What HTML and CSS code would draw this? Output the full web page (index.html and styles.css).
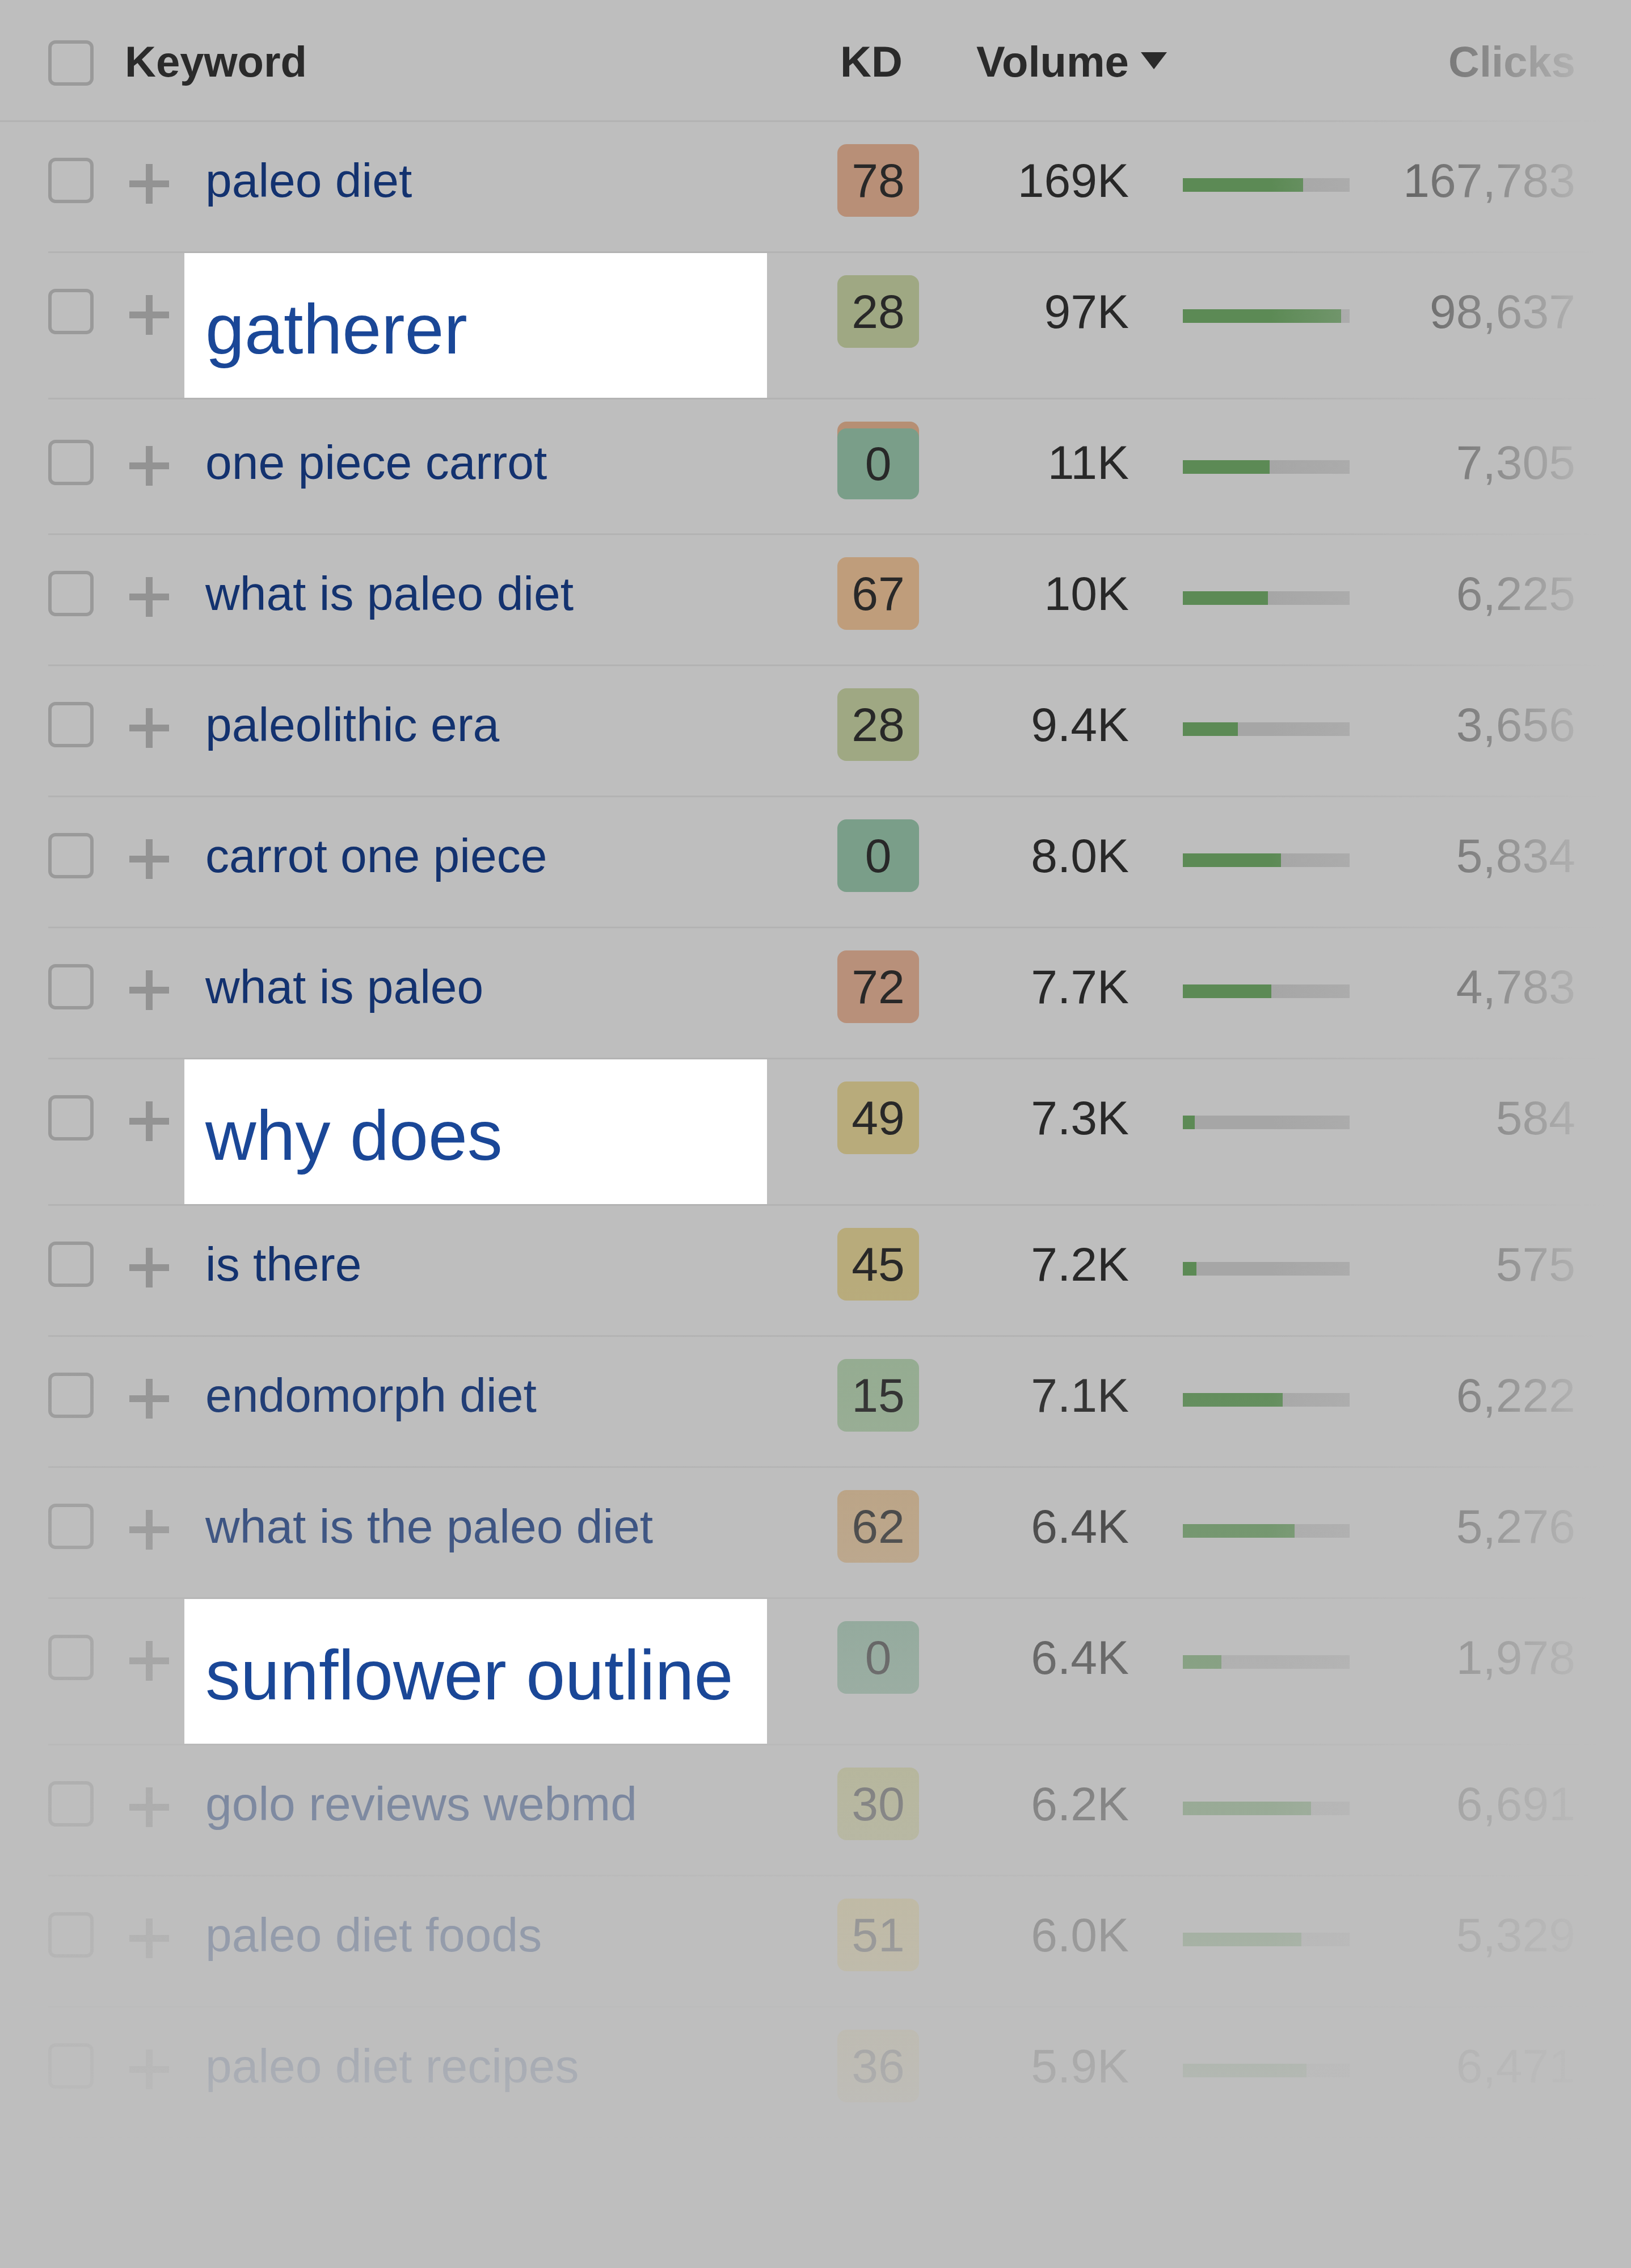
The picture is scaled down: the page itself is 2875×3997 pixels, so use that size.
FILE: index.html
```html
<!DOCTYPE html>
<html lang="en">
<head>
<meta charset="utf-8">
<title>Keywords</title>
<link rel="stylesheet" href="styles.css">
</head>
<body>
<div class="table">
  <div class="thead">
    <span class="cb cb--head"></span>
    <div class="th th-kw">Keyword</div>
    <div class="th th-kd">KD</div>
    <div class="th th-vol">Volume<span class="caret"></span></div>
    <div class="th th-clicks">Clicks</div>
  </div>

  <div class="row">
    <span class="cb"></span>
    <svg class="plus" viewBox="0 0 70 70"><path d="M35 0V70M0 35H70"/></svg>
    <div class="kw">paleo diet</div>
    <div class="kd kd-78">78</div>
    <div class="vol">169K</div>
    <div class="bar"><div class="bar-fill" style="width:72%"></div></div>
    <div class="clicks">167,783</div>
  </div>

  <div class="row row--hl">
    <span class="cb"></span>
    <svg class="plus" viewBox="0 0 70 70"><path d="M35 0V70M0 35H70"/></svg>
    <div class="kw">gatherer</div>
    <div class="kd kd-28">28</div>
    <div class="vol">97K</div>
    <div class="bar"><div class="bar-fill" style="width:95%"></div></div>
    <div class="clicks">98,637</div>
  </div>

  <div class="row row--shift">
    <span class="cb"></span>
    <svg class="plus" viewBox="0 0 70 70"><path d="M35 0V70M0 35H70"/></svg>
    <div class="kw">one piece carrot</div>
    <div class="kd kd-0 kd--capped">0</div>
    <div class="vol">11K</div>
    <div class="bar"><div class="bar-fill" style="width:52%"></div></div>
    <div class="clicks">7,305</div>
  </div>

  <div class="row">
    <span class="cb"></span>
    <svg class="plus" viewBox="0 0 70 70"><path d="M35 0V70M0 35H70"/></svg>
    <div class="kw">what is paleo diet</div>
    <div class="kd kd-67">67</div>
    <div class="vol">10K</div>
    <div class="bar"><div class="bar-fill" style="width:51%"></div></div>
    <div class="clicks">6,225</div>
  </div>

  <div class="row">
    <span class="cb"></span>
    <svg class="plus" viewBox="0 0 70 70"><path d="M35 0V70M0 35H70"/></svg>
    <div class="kw">paleolithic era</div>
    <div class="kd kd-28">28</div>
    <div class="vol">9.4K</div>
    <div class="bar"><div class="bar-fill" style="width:33%"></div></div>
    <div class="clicks">3,656</div>
  </div>

  <div class="row">
    <span class="cb"></span>
    <svg class="plus" viewBox="0 0 70 70"><path d="M35 0V70M0 35H70"/></svg>
    <div class="kw">carrot one piece</div>
    <div class="kd kd-0">0</div>
    <div class="vol">8.0K</div>
    <div class="bar"><div class="bar-fill" style="width:59%"></div></div>
    <div class="clicks">5,834</div>
  </div>

  <div class="row">
    <span class="cb"></span>
    <svg class="plus" viewBox="0 0 70 70"><path d="M35 0V70M0 35H70"/></svg>
    <div class="kw">what is paleo</div>
    <div class="kd kd-72">72</div>
    <div class="vol">7.7K</div>
    <div class="bar"><div class="bar-fill" style="width:53%"></div></div>
    <div class="clicks">4,783</div>
  </div>

  <div class="row row--hl">
    <span class="cb"></span>
    <svg class="plus" viewBox="0 0 70 70"><path d="M35 0V70M0 35H70"/></svg>
    <div class="kw">why does</div>
    <div class="kd kd-49">49</div>
    <div class="vol">7.3K</div>
    <div class="bar"><div class="bar-fill" style="width:7%"></div></div>
    <div class="clicks">584</div>
  </div>

  <div class="row">
    <span class="cb"></span>
    <svg class="plus" viewBox="0 0 70 70"><path d="M35 0V70M0 35H70"/></svg>
    <div class="kw">is there</div>
    <div class="kd kd-45">45</div>
    <div class="vol">7.2K</div>
    <div class="bar"><div class="bar-fill" style="width:8%"></div></div>
    <div class="clicks">575</div>
  </div>

  <div class="row">
    <span class="cb"></span>
    <svg class="plus" viewBox="0 0 70 70"><path d="M35 0V70M0 35H70"/></svg>
    <div class="kw">endomorph diet</div>
    <div class="kd kd-15">15</div>
    <div class="vol">7.1K</div>
    <div class="bar"><div class="bar-fill" style="width:60%"></div></div>
    <div class="clicks">6,222</div>
  </div>

  <div class="row">
    <span class="cb"></span>
    <svg class="plus" viewBox="0 0 70 70"><path d="M35 0V70M0 35H70"/></svg>
    <div class="kw">what is the paleo diet</div>
    <div class="kd kd-62">62</div>
    <div class="vol">6.4K</div>
    <div class="bar"><div class="bar-fill" style="width:67%"></div></div>
    <div class="clicks">5,276</div>
  </div>

  <div class="row row--hl">
    <span class="cb"></span>
    <svg class="plus" viewBox="0 0 70 70"><path d="M35 0V70M0 35H70"/></svg>
    <div class="kw">sunflower outline</div>
    <div class="kd kd-0">0</div>
    <div class="vol">6.4K</div>
    <div class="bar"><div class="bar-fill" style="width:23%"></div></div>
    <div class="clicks">1,978</div>
  </div>

  <div class="row">
    <span class="cb"></span>
    <svg class="plus" viewBox="0 0 70 70"><path d="M35 0V70M0 35H70"/></svg>
    <div class="kw">golo reviews webmd</div>
    <div class="kd kd-30">30</div>
    <div class="vol">6.2K</div>
    <div class="bar"><div class="bar-fill" style="width:77%"></div></div>
    <div class="clicks">6,691</div>
  </div>

  <div class="row">
    <span class="cb"></span>
    <svg class="plus" viewBox="0 0 70 70"><path d="M35 0V70M0 35H70"/></svg>
    <div class="kw">paleo diet foods</div>
    <div class="kd kd-51">51</div>
    <div class="vol">6.0K</div>
    <div class="bar"><div class="bar-fill" style="width:71%"></div></div>
    <div class="clicks">5,329</div>
  </div>

  <div class="row">
    <span class="cb"></span>
    <svg class="plus" viewBox="0 0 70 70"><path d="M35 0V70M0 35H70"/></svg>
    <div class="kw">paleo diet recipes</div>
    <div class="kd kd-36">36</div>
    <div class="vol">5.9K</div>
    <div class="bar"><div class="bar-fill" style="width:74%"></div></div>
    <div class="clicks">6,471</div>
  </div>

  <div class="fade-bottom"></div>
  <div class="fade-right"></div>
</div>
</body>
</html>
```

FILE: styles.css
```css
html, body {
  margin: 0;
  padding: 0;
  background: #bebebe;
}

body {
  width: 2875px;
  height: 3997px;
  overflow: hidden;
  font-family: "Liberation Sans", Arial, Helvetica, sans-serif;
  color: #282828;
}

.table {
  position: relative;
  height: 3997px;
}

/* ---------- header ---------- */
.thead {
  display: flex;
  align-items: flex-start;
  height: 212px;
  padding-left: 85px;
  border-bottom: 3px solid #b3b3b3;
}

.th {
  flex: none;
  font-size: 76px;
  font-weight: 700;
  line-height: 100px;
  padding-top: 59px;
  color: #2a2a2a;
  white-space: nowrap;
}

.th-kw {
  margin-left: 55px;
  width: 1256px;
}

.th-kd {
  width: 144px;
  box-sizing: border-box;
  padding-left: 5px;
}

.th-vol {
  display: flex;
  align-items: flex-start;
  margin-left: 101px;
}

.caret {
  flex: none;
  width: 0;
  height: 0;
  margin-left: 21px;
  margin-top: 33px;
  border-left: 23px solid transparent;
  border-right: 23px solid transparent;
  border-top: 30px solid #2a2a2a;
}

.th-clicks {
  margin-left: auto;
  margin-right: 98px;
}

/* ---------- rows ---------- */
.row {
  display: flex;
  align-items: flex-start;
  height: 228px;
  margin-left: 85px;
  border-bottom: 3px solid #b3b3b3;
}

.row--hl {
  height: 255px;
}

.row--shift {
  padding-top: 8px;
}

.cb {
  flex: none;
  box-sizing: border-box;
  width: 80px;
  height: 80px;
  margin-top: 63px;
  border: 6px solid #9a9a9a;
  border-radius: 13px;
}

.cb--head {
  margin-top: 71px;
}

.plus {
  flex: none;
  display: block;
  width: 70px;
  height: 70px;
  margin-left: 63px;
  margin-top: 74px;
}

.plus path {
  stroke: #939393;
  stroke-width: 12;
  fill: none;
}

.kw {
  flex: none;
  align-self: stretch;
  box-sizing: border-box;
  width: 1027px;
  margin-left: 27px;
  padding-left: 37px;
  padding-top: 53px;
  font-size: 84px;
  line-height: 100px;
  color: #13326f;
  white-space: nowrap;
}

.row--hl .kw {
  position: relative;
  z-index: 2;
  background: #ffffff;
  font-size: 124px;
  line-height: 140px;
  padding-top: 64px;
  color: #1a4797;
}

.kd {
  flex: none;
  width: 144px;
  height: 128px;
  margin-left: 124px;
  margin-top: 39px;
  border-radius: 16px;
  text-align: center;
  font-size: 84px;
  line-height: 128px;
  color: #282828;
}

.kd--capped {
  height: 125px;
  line-height: 125px;
  margin-top: 43px;
  box-shadow: 0 -12px 0 0 #b68f74;
}

.kd-78 { background: #b88f77; }
.kd-72 { background: #b8907a; }
.kd-67 { background: #bf9d7b; }
.kd-62 { background: #bb9e79; }
.kd-51 { background: #c4b068; }
.kd-49 { background: #b8ab7b; }
.kd-45 { background: #b8ab7b; }
.kd-36 { background: #bfae76; }
.kd-30 { background: #acac70; }
.kd-28 { background: #9fa883; }
.kd-15 { background: #93ab8f; }
.kd-0  { background: #7a9e89; }

.vol {
  flex: none;
  width: 370px;
  text-align: right;
  padding-top: 53px;
  font-size: 84px;
  line-height: 100px;
  color: #282828;
}

.bar {
  flex: none;
  width: 294px;
  height: 24px;
  margin-left: 95px;
  margin-top: 99px;
  background: #a6a6a6;
}

.bar-fill {
  height: 100%;
  background: #5c8a55;
}

.clicks {
  flex: none;
  width: 398px;
  text-align: right;
  padding-top: 53px;
  font-size: 84px;
  line-height: 100px;
  color: #282828;
}

/* ---------- fades ---------- */
.fade-bottom {
  position: absolute;
  left: 0;
  right: 0;
  top: 2250px;
  bottom: 0;
  z-index: 1;
  pointer-events: none;
  background: linear-gradient(to bottom,
    rgba(190, 190, 190, 0) 0px,
    rgba(190, 190, 190, 0.08) 208px,
    rgba(190, 190, 190, 0.25) 439px,
    rgba(190, 190, 190, 0.44) 670px,
    rgba(190, 190, 190, 0.62) 928px,
    rgba(190, 190, 190, 0.75) 1159px,
    rgba(190, 190, 190, 0.87) 1390px,
    rgba(190, 190, 190, 1) 1600px);
}

.fade-right {
  position: absolute;
  top: 0;
  bottom: 0;
  left: 2240px;
  right: 0;
  z-index: 1;
  pointer-events: none;
  background: linear-gradient(to right,
    rgba(190, 190, 190, 0) 0px,
    rgba(190, 190, 190, 1) 590px);
}
```
